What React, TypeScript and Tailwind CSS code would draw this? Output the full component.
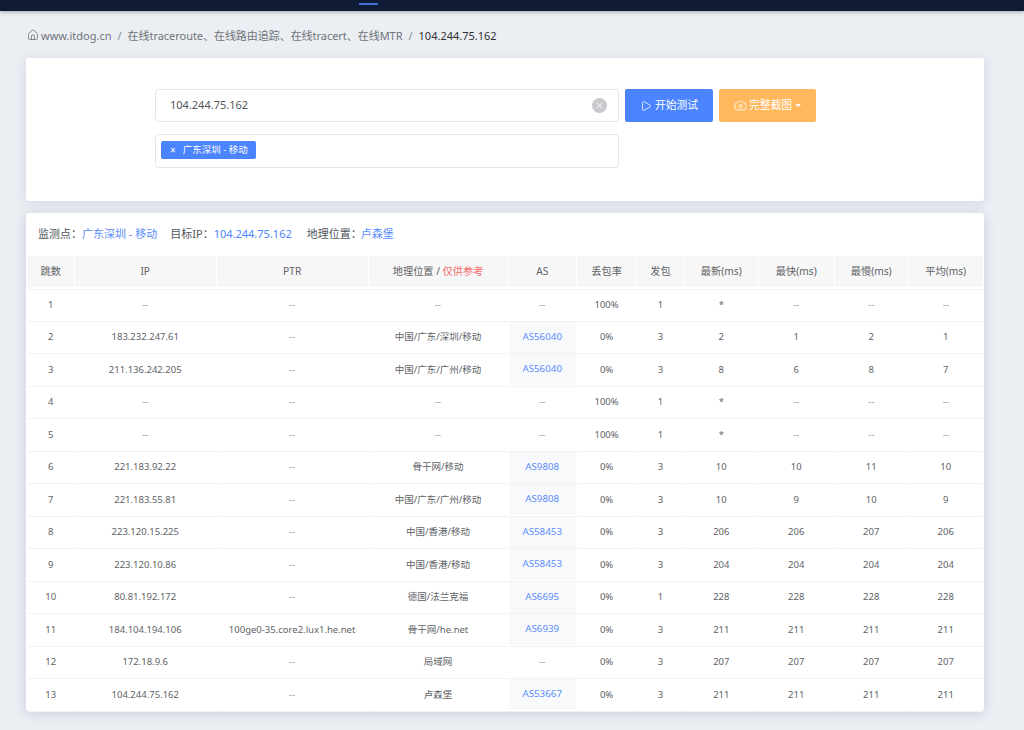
import { Camera, House, Play, X } from 'lucide-react'

const cols = [
  { label: '跳数', w: 'w-[46px]' },
  { label: 'IP', w: 'w-[140px]' },
  { label: 'PTR', w: 'w-[150px]' },
  { label: '地理位置', w: 'w-[138px]' },
  { label: 'AS', w: 'w-[67px]' },
  { label: '丢包率', w: 'w-[59px]' },
  { label: '发包', w: 'w-[46px]' },
  { label: '最新(ms)', w: 'w-[73px]' },
  { label: '最快(ms)', w: 'w-[74px]' },
  { label: '最慢(ms)', w: 'w-[73px]' },
  { label: '平均(ms)', w: 'w-[73px]' },
]

const rows = [
  ['1', '--', '--', '--', '--', '100%', '1', '*', '--', '--', '--'],
  ['2', '183.232.247.61', '--', '中国/广东/深圳/移动', 'AS56040', '0%', '3', '2', '1', '2', '1'],
  ['3', '211.136.242.205', '--', '中国/广东/广州/移动', 'AS56040', '0%', '3', '8', '6', '8', '7'],
  ['4', '--', '--', '--', '--', '100%', '1', '*', '--', '--', '--'],
  ['5', '--', '--', '--', '--', '100%', '1', '*', '--', '--', '--'],
  ['6', '221.183.92.22', '--', '骨干网/移动', 'AS9808', '0%', '3', '10', '10', '11', '10'],
  ['7', '221.183.55.81', '--', '中国/广东/广州/移动', 'AS9808', '0%', '3', '10', '9', '10', '9'],
  ['8', '223.120.15.225', '--', '中国/香港/移动', 'AS58453', '0%', '3', '206', '206', '207', '206'],
  ['9', '223.120.10.86', '--', '中国/香港/移动', 'AS58453', '0%', '3', '204', '204', '204', '204'],
  ['10', '80.81.192.172', '--', '德国/法兰克福', 'AS6695', '0%', '1', '228', '228', '228', '228'],
  ['11', '184.104.194.106', '100ge0-35.core2.lux1.he.net', '骨干网/he.net', 'AS6939', '0%', '3', '211', '211', '211', '211'],
  ['12', '172.18.9.6', '--', '局域网', '--', '0%', '3', '207', '207', '207', '207'],
  ['13', '104.244.75.162', '--', '卢森堡', 'AS53667', '0%', '3', '211', '211', '211', '211'],
]

export default function App() {
  return (
    <div className="h-[730px] overflow-hidden bg-[#ebeef3] font-['Noto_Sans','Noto_Sans_CJK_SC',sans-serif] text-[#606266]">
      <div className="h-[11px] bg-[#0f1b35] shadow-[0_1px_4px_rgba(15,27,53,0.35)]">
        <div className="ml-[359px] h-[11px] w-[19px]">
          <div className="relative top-[3px] h-[1.5px] bg-[#3f6fd8]" />
        </div>
      </div>

      <div className="flex h-[47px] items-center pl-[27px] pt-[1px] text-[11px] leading-none text-[#6f7479]">
        <House size={12} strokeWidth={1.6} className="mr-[2px]" />
        <span>www.itdog.cn</span>
        <span className="mx-[6px] text-[#8a8e94]">/</span>
        <span className="tracking-[-0.04px]">在线traceroute、在线路由追踪、在线tracert、在线MTR</span>
        <span className="mx-[6px] text-[#8a8e94]">/</span>
        <span className="text-[#303133]">104.244.75.162</span>
      </div>

      <div className="ml-[26px] h-[143px] w-[958px] rounded-[3px] bg-white pl-[129px] pt-[31px] shadow-[0_2px_12px_rgba(60,80,120,0.14)]">
        <div className="flex gap-[6px]">
          <div className="flex h-[33px] w-[464px] items-center justify-between rounded-[3px] border border-[#e4e6e9] pl-[14px] pr-[11px] text-[11px] text-[#53565b]">
            <span>104.244.75.162</span>
            <span className="flex h-[15px] w-[15px] items-center justify-center rounded-full bg-[#c8c9cc] text-white">
              <X size={11} strokeWidth={2} />
            </span>
          </div>
          <button className="flex h-[33px] w-[88px] items-center justify-center gap-[3px] rounded-[2px] bg-[#4a84ff] text-[10.8px] text-white">
            <Play size={12} strokeWidth={1.5} />
            开始测试
          </button>
          <button className="flex h-[33px] w-[97px] items-center justify-center gap-[2px] rounded-[2px] bg-[#ffb85c] text-[10.8px] text-white">
            <Camera size={13} strokeWidth={1.5} />
            完整截图
            <span className="ml-[1px] h-0 w-0 border-x-[3px] border-t-[3px] border-x-transparent border-t-white" />
          </button>
        </div>
        <div className="mt-[12px] flex h-[34px] w-[464px] items-start rounded-[3px] border border-[#e4e6e9] pl-[5px] pt-[6px]">
          <span className="flex h-[18px] w-[95px] items-center rounded-[2px] bg-[#4a84ff] pl-[9px] text-[9.5px] leading-none text-white">
            <span className="mr-[7px] text-[10px] leading-none">×</span>
            广东深圳 - 移动
          </span>
        </div>
      </div>

      <div className="ml-[26px] mt-[12px] h-[498px] w-[958px] rounded-[3px] bg-white shadow-[0_2px_12px_rgba(60,80,120,0.2)]">
        <div className="flex h-[43px] items-center pl-[12px] text-[11px] text-[#53565b]">
          <span>监测点：</span>
          <span className="text-[#5b8dfb]">广东深圳 - 移动</span>
          <span className="ml-[13px]">目标IP：</span>
          <span className="text-[#4a84ff]">104.244.75.162</span>
          <span className="ml-[15px]">地理位置：</span>
          <span className="-ml-[1px] text-[#5b8dfb]">卢森堡</span>
        </div>
        <table className="ml-[0.5px] w-[957px] table-fixed border-separate border-spacing-x-[1.5px] border-spacing-y-0 text-center text-[9.5px]">
          <thead>
            <tr>
              {cols.map((c, i) => (
                <th key={c.label} className={`${c.w} h-[33px] border-b-2 border-white bg-[#f7f7f7] p-0 text-[10.2px] font-normal text-[#606266] shadow-[0_1px_0_#f2f2f2]`}>
                  {i === 3 ? (
                    <>
                      地理位置 / <span className="text-[#f56c6c]">仅供参考</span>
                    </>
                  ) : (
                    c.label
                  )}
                </th>
              ))}
            </tr>
          </thead>
          <tbody>
            {rows.map((r) => (
              <tr key={r[0]}>
                {r.map((v, i) => (
                  <td key={i} className="h-[32.5px] border-b border-[#f2f2f2] p-0">
                    {i === 4 && v !== '--' ? (
                      <div className="flex h-[31px] items-center justify-center bg-[#f8f9fb] text-[9.8px] text-[#5b8dfb]">{v}</div>
                    ) : (
                      <span className={v === '--' ? 'text-[#909399]' : ''}>{v}</span>
                    )}
                  </td>
                ))}
              </tr>
            ))}
          </tbody>
        </table>
      </div>
    </div>
  )
}
